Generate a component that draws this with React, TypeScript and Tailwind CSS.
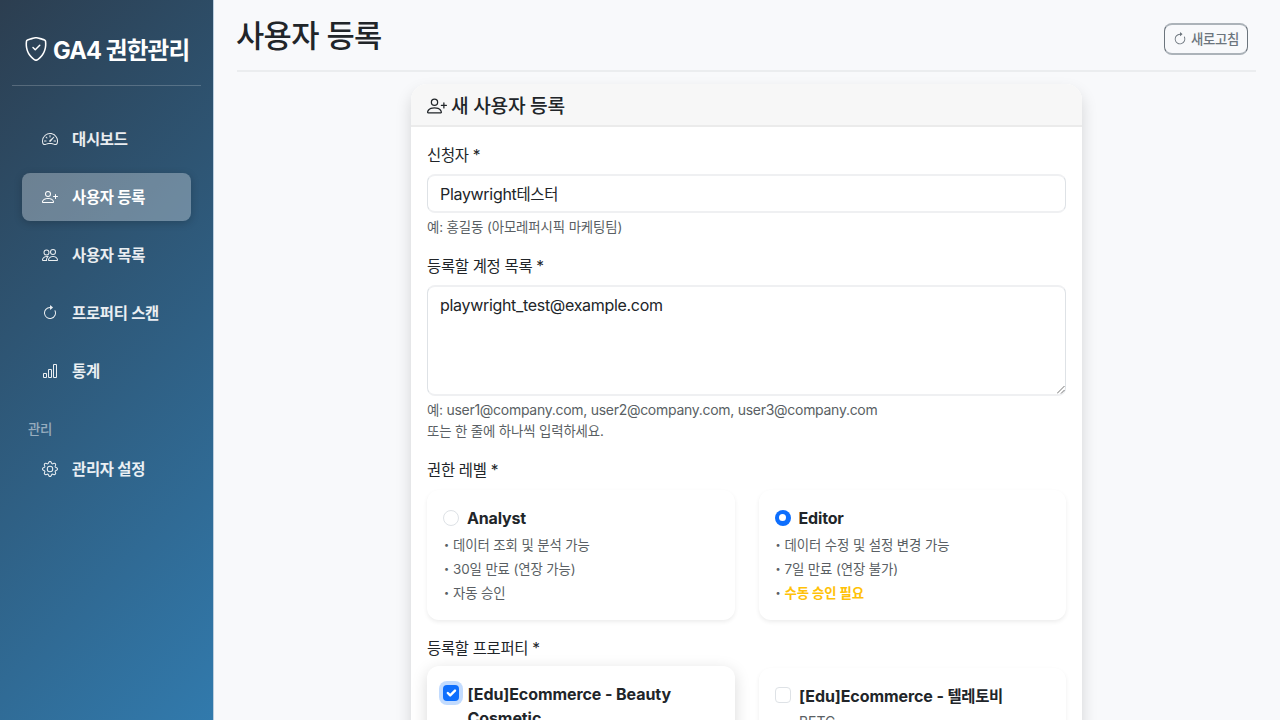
import type { ReactNode } from "react";
import {
  BsArrowClockwise,
  BsBarChart,
  BsGear,
  BsPeople,
  BsPersonPlus,
  BsShieldCheck,
  BsSpeedometer2,
} from "react-icons/bs";

function NavItem({ icon, label, active = false }: { icon: ReactNode; label: string; active?: boolean }) {
  return (
    <a
      className={
        active
          ? "flex h-12 items-center gap-3.5 rounded-lg bg-white/30 pl-5 text-white shadow-[0_2px_8px_rgba(0,0,0,0.2)]"
          : "flex h-12 items-center gap-3.5 rounded-lg pl-5 text-white/90"
      }
    >
      <span className="w-4 text-base">{icon}</span>
      <span className="pt-0.5 text-[15.4px] leading-6 font-semibold tracking-[-0.018em]">{label}</span>
    </a>
  );
}

function Label({ children }: { children: ReactNode }) {
  return <div className="h-6 pt-px text-[15.4px] leading-6 tracking-[-0.018em]">{children}</div>;
}

function Bullet({ children }: { children: ReactNode }) {
  return (
    <li className="flex h-6 items-center leading-6 text-[#5a5f64]">
      <span className="w-2.5 pl-px text-[9px]">•</span>
      {children}
    </li>
  );
}

function LevelCard({ name, checked, children }: { name: string; checked: boolean; children: ReactNode }) {
  return (
    <div className="h-[130px] flex-1 rounded-xl bg-white px-4 pt-4 shadow-[0_2px_4px_rgba(0,0,0,0.075)]">
      <div className="flex h-6 items-center gap-2">
        {checked ? (
          <span className="-mt-px flex size-4 items-center justify-center rounded-full bg-[#0d6efd]">
            <span className="size-[7.5px] rounded-full bg-white" />
          </span>
        ) : (
          <span className="-mt-px size-4 rounded-full border border-[#dee2e6] bg-white" />
        )}
        <span className="text-base leading-6 font-bold tracking-[-0.01em]">{name}</span>
      </div>
      <ul className="mt-[3px] text-[13.4px] tracking-[-0.008em]">{children}</ul>
    </div>
  );
}

export default function App() {
  return (
    <div className="flex h-[720px] w-[1280px] overflow-hidden bg-[#f8f9fb] font-['Inter','Noto_Sans_CJK_KR',sans-serif] text-[#212529]">
      <aside className="h-[720px] w-[214px] shrink-0 border-r border-[#bccfdf] bg-[linear-gradient(135deg,#2c3e50_0%,#3498db_150%)]">
        <div className="mx-3 flex h-[86px] items-center border-b border-white/20 pt-[13px] pl-3">
          <BsShieldCheck className="size-6 text-white" />
          <span className="mt-1 ml-[5px] text-[23.6px] font-bold tracking-[-0.035em] text-white">GA4 권한관리</span>
        </div>
        <nav className="mt-[29px] ml-[22px] flex w-[169.4px] flex-col gap-2.5">
          <NavItem icon={<BsSpeedometer2 />} label="대시보드" />
          <NavItem icon={<BsPersonPlus />} label="사용자 등록" active />
          <NavItem icon={<BsPeople />} label="사용자 목록" />
          <NavItem icon={<BsArrowClockwise />} label="프로퍼티 스캔" />
          <NavItem icon={<BsBarChart />} label="통계" />
        </nav>
        <div className="mt-[23px] ml-7 h-[21px] pt-px text-[13.4px] leading-[21px] font-medium tracking-[-0.02em] text-white/50">관리</div>
        <nav className="mt-1.5 ml-[22px] w-[169.4px]">
          <NavItem icon={<BsGear />} label="관리자 설정" />
        </nav>
      </aside>

      <main className="flex min-w-0 flex-1 flex-col pr-6 pl-[23px]">
        <header className="flex h-[72px] shrink-0 justify-between border-b-2 border-[#ebedef]">
          <h1 className="mt-[17px] -ml-px text-[30.7px] leading-[38px] font-medium tracking-[-0.02em]">사용자 등록</h1>
          <button className="mt-[23px] mr-2 flex h-8 w-[84px] items-center justify-center gap-1 rounded-lg border-x border-y-2 border-x-[#6c757d] border-y-[#acb3b9] text-[13.4px] font-medium tracking-[-0.02em] text-[#6c757d]">
            <BsArrowClockwise className="size-3.5" />
            새로고침
          </button>
        </header>

        <section className="mt-3 ml-[174px] w-[671px] flex-1 rounded-t-2xl bg-white shadow-[0_8px_16px_rgba(0,0,0,0.15)]">
          <div className="flex h-[43px] items-center gap-1 rounded-t-2xl border-b-2 border-[#ebebeb] bg-[#f7f7f7] px-4 pt-0.5 text-[19.2px] leading-6 font-medium tracking-[-0.015em]">
            <BsPersonPlus className="size-5" />
            새 사용자 등록
          </div>
          <div className="px-4 pt-4">
            <Label>신청자 *</Label>
            <div className="mt-[7px] h-[39px] rounded-lg border-x border-y-2 border-x-[#dee2e6] border-y-[#eff0f2] px-3 pt-1.5 text-base leading-6 tracking-[-0.0195em]">
              Playwright<span className="text-[15.4px]">테스터</span>
            </div>
            <div className="mt-[3px] h-[21px] pt-px text-[13.4px] leading-[21px] tracking-[-0.008em] text-[#5a5f64]">
              예: 홍길동 (아모레퍼시픽 마케팅팀)
            </div>

            <div className="mt-[17px]">
              <Label>등록할 계정 목록 *</Label>
            </div>
            <div className="relative mt-[7px] h-[111px] rounded-lg border-x border-y-2 border-x-[#dee2e6] border-y-[#eff0f2] px-3 pt-[6px] text-base leading-6 tracking-[-0.0195em]">
              playwright_test@example.com
              <svg className="absolute right-0 bottom-0 size-2" viewBox="0 0 8 8" stroke="#777" strokeWidth="1" fill="none">
                <path d="M0 7.5 7.5 0M4 7.5 7.5 4" />
              </svg>
            </div>
            <div className="mt-[3px] text-sm leading-[21px] tracking-[-0.02em] text-[#5a5f64]">
              <div>
                <span className="text-[13.4px]">예</span>: user1@company.com, user2@company.com, user3@company.com
              </div>
              <div className="text-[13.4px] tracking-[-0.01em]">또는 한 줄에 하나씩 입력하세요.</div>
            </div>

            <div className="mt-4">
              <Label>권한 레벨 *</Label>
            </div>
            <div className="mt-2 flex gap-6">
              <LevelCard name="Analyst" checked={false}>
                <Bullet>데이터 조회 및 분석 가능</Bullet>
                <Bullet>30일 만료 (연장 가능)</Bullet>
                <Bullet>자동 승인</Bullet>
              </LevelCard>
              <LevelCard name="Editor" checked>
                <Bullet>데이터 수정 및 설정 변경 가능</Bullet>
                <Bullet>7일 만료 (연장 불가)</Bullet>
                <Bullet>
                  <span className="font-bold text-[#ffc107]">수동 승인 필요</span>
                </Bullet>
              </LevelCard>
            </div>

            <div className="mt-4">
              <Label>등록할 프로퍼티 *</Label>
            </div>
            <div className="mt-1.5 flex gap-6">
              <div className="flex h-[120px] flex-1 gap-2 rounded-xl bg-white px-4 pt-4 shadow-[0_4px_16px_rgba(0,0,0,0.15)]">
                <span className="mt-[3px] flex size-4 shrink-0 items-center justify-center rounded bg-[#0d6efd] shadow-[0_0_0_4px_rgba(13,110,253,0.25)]">
                  <svg viewBox="0 0 20 20" className="size-4" fill="none" stroke="#fff" strokeWidth="3" strokeLinecap="round" strokeLinejoin="round">
                    <path d="m6 10 3 3 6-6" />
                  </svg>
                </span>
                <div className="pl-[0.5px] text-base leading-6 font-bold tracking-[-0.005em]">
                  [Edu]Ecommerce - Beauty
                  <br />
                  Cosmetic
                </div>
              </div>
              <div className="mt-0.5 flex h-[120px] flex-1 gap-2 rounded-xl bg-white px-4 pt-4 shadow-[0_2px_4px_rgba(0,0,0,0.075)]">
                <span className="mt-[3px] size-4 shrink-0 rounded border border-[#dee2e6] bg-white" />
                <div className="pl-[0.5px] text-base leading-6 font-bold tracking-[-0.005em]">
                  [Edu]Ecommerce - <span className="text-[15.4px] tracking-[-0.025em]">텔레토비</span>
                  <div className="text-sm leading-[25px] font-normal text-[#5a5f64]">BETC</div>
                </div>
              </div>
            </div>
          </div>
        </section>
      </main>
    </div>
  );
}
